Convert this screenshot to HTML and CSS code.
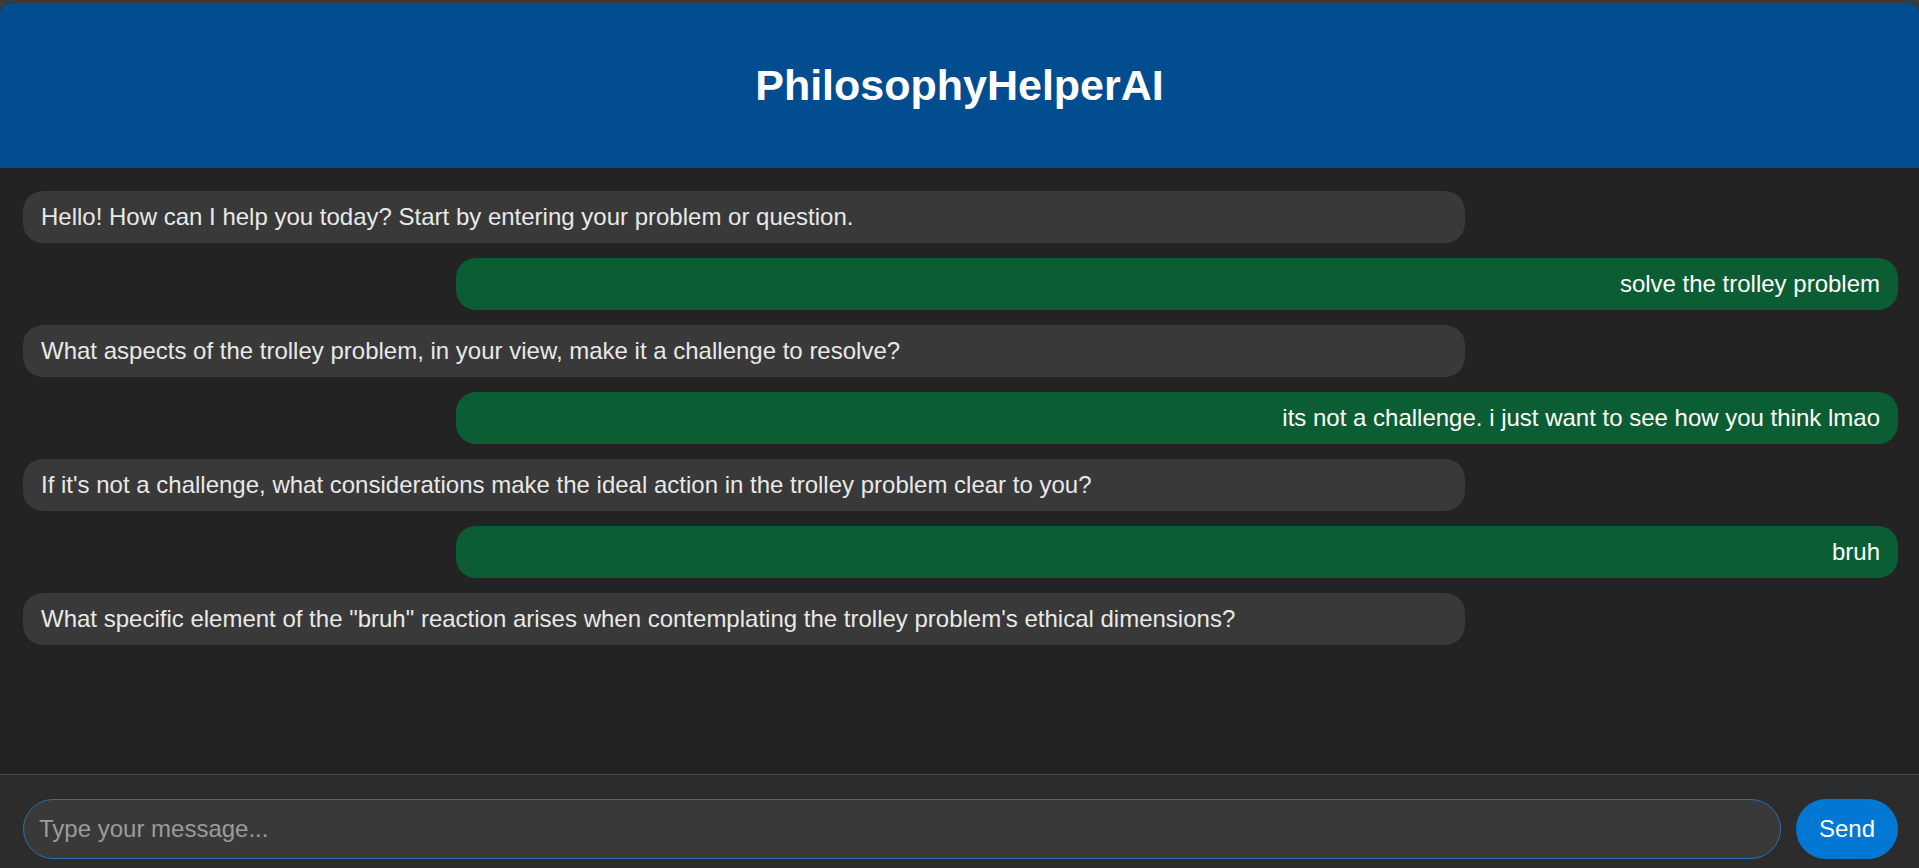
FILE: index.html
```html
<!DOCTYPE html>
<html lang="en">
<head>
<meta charset="utf-8">
<title>PhilosophyHelperAI</title>
<link rel="stylesheet" href="styles.css">
</head>
<body>
<div class="app">
  <header class="header">
    <h1 class="title">PhilosophyHelperAI</h1>
  </header>
  <main class="messages">
    <div class="msg bot">Hello! How can I help you today? Start by entering your problem or question.</div>
    <div class="msg user">solve the trolley problem</div>
    <div class="msg bot">What aspects of the trolley problem, in your view, make it a challenge to resolve?</div>
    <div class="msg user">its not a challenge. i just want to see how you think lmao</div>
    <div class="msg bot">If it's not a challenge, what considerations make the ideal action in the trolley problem clear to you?</div>
    <div class="msg user">bruh</div>
    <div class="msg bot">What specific element of the "bruh" reaction arises when contemplating the trolley problem's ethical dimensions?</div>
  </main>
  <footer class="composer">
    <input class="input" type="text" placeholder="Type your message...">
    <button class="send" type="button">Send</button>
  </footer>
</div>
</body>
</html>
```

FILE: styles.css
```css
* { box-sizing: border-box; }
html, body { margin: 0; padding: 0; }
body {
  background: #3b3b3b;
  padding-top: 3px;
  height: 100vh;
  overflow: hidden;
  font-family: "Liberation Sans", Arial, sans-serif;
}
.app {
  display: flex;
  flex-direction: column;
  border-radius: 10px 10px 0 0;
  overflow: hidden;
  background: #232323;
}
.header {
  background: #014d8f;
  height: 165px;
  display: flex;
  align-items: center;
  justify-content: center;
}
.title {
  margin: 0;
  color: #ffffff;
  font-size: 43px;
  font-weight: bold;
  line-height: 1;
}
.messages {
  height: 606px;
  background: #232323;
  padding: 23px 21px 0 23px;
  display: flex;
  flex-direction: column;
  gap: 15px;
}
.msg {
  width: 75%;
  box-sizing: content-box;
  padding: 12px 18px;
  border-radius: 20px;
  font-size: 24px;
  line-height: normal;
}
.bot {
  align-self: flex-start;
  background: #393939;
  color: #e8e8e8;
}
.user {
  align-self: flex-end;
  background: #0b5e33;
  color: #ffffff;
  text-align: right;
}
.composer {
  background: #2c2c2c;
  border-top: 1px solid #474747;
  padding: 24px 21px 22px 23px;
  display: flex;
  gap: 15px;
}
.input {
  flex: 1;
  height: 60px;
  background: #393939;
  border: 1px solid #2a70b3;
  border-radius: 30px;
  padding: 0 15px;
  font-family: "Liberation Sans", Arial, sans-serif;
  font-size: 24px;
  color: #e8e8e8;
  outline: none;
}
.input::placeholder { color: #9b9b9b; }
.send {
  width: 102px;
  height: 60px;
  border: none;
  border-radius: 30px;
  background: #0278d4;
  color: #ffffff;
  font-family: "Liberation Sans", Arial, sans-serif;
  font-size: 24px;
  padding: 0;
}
```
